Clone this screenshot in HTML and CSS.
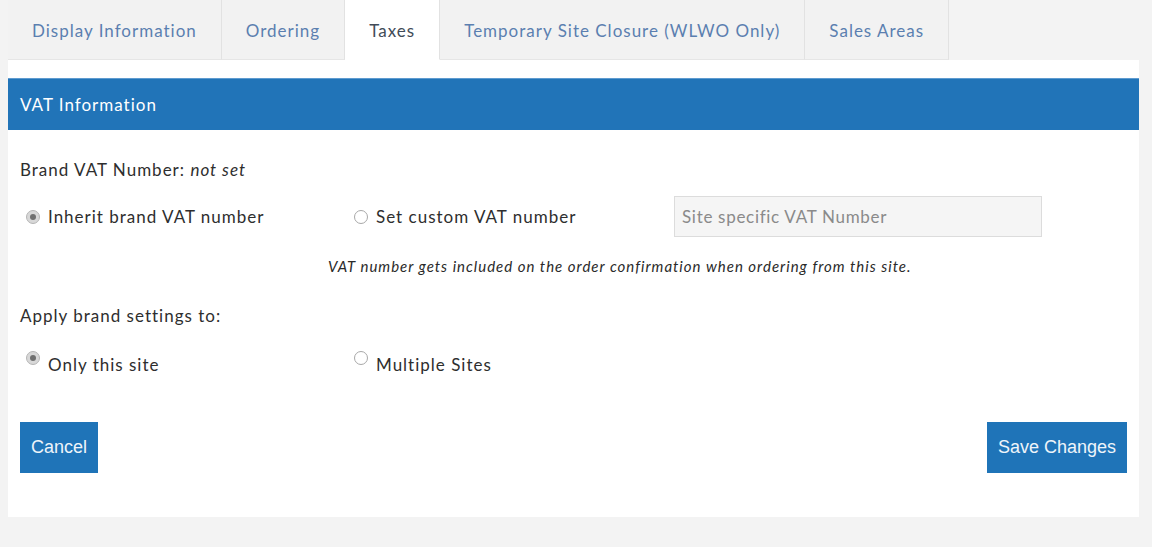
FILE: index.html
```html
<!DOCTYPE html>
<html lang="en">
<head>
    <meta charset="UTF-8">
    <meta name="viewport" content="width=device-width, initial-scale=1.0">
    <title>Site Settings - Taxes</title>
    <link rel="stylesheet" href="styles.css">
</head>
<body>
    <div class="page">
        <ul class="tabs">
            <li class="tab">Display Information</li>
            <li class="tab">Ordering</li>
            <li class="tab active">Taxes</li>
            <li class="tab">Temporary Site Closure (WLWO Only)</li>
            <li class="tab">Sales Areas</li>
        </ul>
        <div class="panel">
            <div class="panel-heading">VAT Information</div>
            <div class="panel-body">
                <p class="brand-vat">Brand VAT Number: <em>not set</em></p>
                <div class="option-row">
                    <label class="option first"><span class="radio checked"></span>Inherit brand VAT number</label>
                    <label class="option second"><span class="radio"></span>Set custom VAT number</label>
                    <input class="vat-input" type="text" placeholder="Site specific VAT Number">
                </div>
                <p class="help">VAT number gets included on the order confirmation when ordering from this site.</p>
                <p class="apply">Apply brand settings to:</p>
                <div class="option-row small">
                    <label class="option first"><span class="radio checked raised"></span>Only this site</label>
                    <label class="option second"><span class="radio raised"></span>Multiple Sites</label>
                </div>
                <div class="actions">
                    <button class="btn">Cancel</button>
                    <button class="btn">Save Changes</button>
                </div>
            </div>
        </div>
    </div>
</body>
</html>
```

FILE: styles.css
```css
body { margin: 0; background: #f3f3f3; font-family: Lato, "Open Sans", sans-serif; color: #2e2e2e; }
.page { padding: 0 13px 29px 8px; }
.tabs { display: flex; list-style: none; margin: 0; padding: 0; height: 60px; }
.tab { padding: 2px 24px 0; line-height: 58px; font-size: 17px; letter-spacing: 1px; color: #5b7fb0; background: #f2f2f2; border-right: 1px solid #e2e2e2; border-bottom: 1px solid #e6e6e6; box-sizing: border-box; }
.tab.active { background: #fff; color: #414b58; border-bottom-color: #fff; }
.panel { background: #fff; padding-top: 18px; }
.panel-heading { background: #2174b8; color: #fff; font-size: 17px; letter-spacing: 1px; height: 52px; line-height: 52px; padding-left: 12px; border-top: 1px solid #5e9bd0; box-sizing: border-box; }
.panel-body { padding: 0 12px 44px 12px; }
.brand-vat { margin: 30px 0 0; font-size: 17px; letter-spacing: 1px; line-height: 20px; }
.option-row { display: flex; align-items: center; margin-top: 16px; height: 41px; }
.option-row.small { margin-top: 28px; height: 20px; }
.option { display: flex; align-items: center; font-size: 17px; letter-spacing: 1px; color: #2e2e2e; }
.option.first { width: 334px; padding-left: 6px; box-sizing: border-box; }
.option.second { width: 320px; box-sizing: border-box; }
.radio { width: 14px; height: 14px; border: 1px solid #a8a8a8; border-radius: 50%; box-sizing: border-box; margin-right: 8px; background: #fff; display: inline-flex; align-items: center; justify-content: center; }
.radio.checked { background: #d8d8d8; border-color: #b5b5b5; }
.radio.checked::after { content: ""; width: 6px; height: 6px; border-radius: 50%; background: #707070; }
.radio.raised { position: relative; top: -6px; }
.vat-input { width: 368px; height: 41px; box-sizing: border-box; background: #f5f5f5; border: 1px solid #dcdcdc; padding: 0 7px; font-family: Lato, sans-serif; font-size: 17px; letter-spacing: 0.7px; color: #555; }
.vat-input::placeholder { color: #8a8a8a; }
.help { margin: 20px 0 0 308px; font-size: 15px; letter-spacing: 1px; line-height: 18px; font-style: italic; color: #2a2a2a; }
.apply { margin: 31px 0 0; font-size: 17px; letter-spacing: 1px; line-height: 20px; }
.actions { display: flex; justify-content: space-between; margin-top: 48px; }
.btn { background: #1f74b8; color: #eef4fa; border: 0; height: 51px; padding: 0 11px; font-family: "Liberation Sans", Arial, sans-serif; font-size: 18px; }
```
